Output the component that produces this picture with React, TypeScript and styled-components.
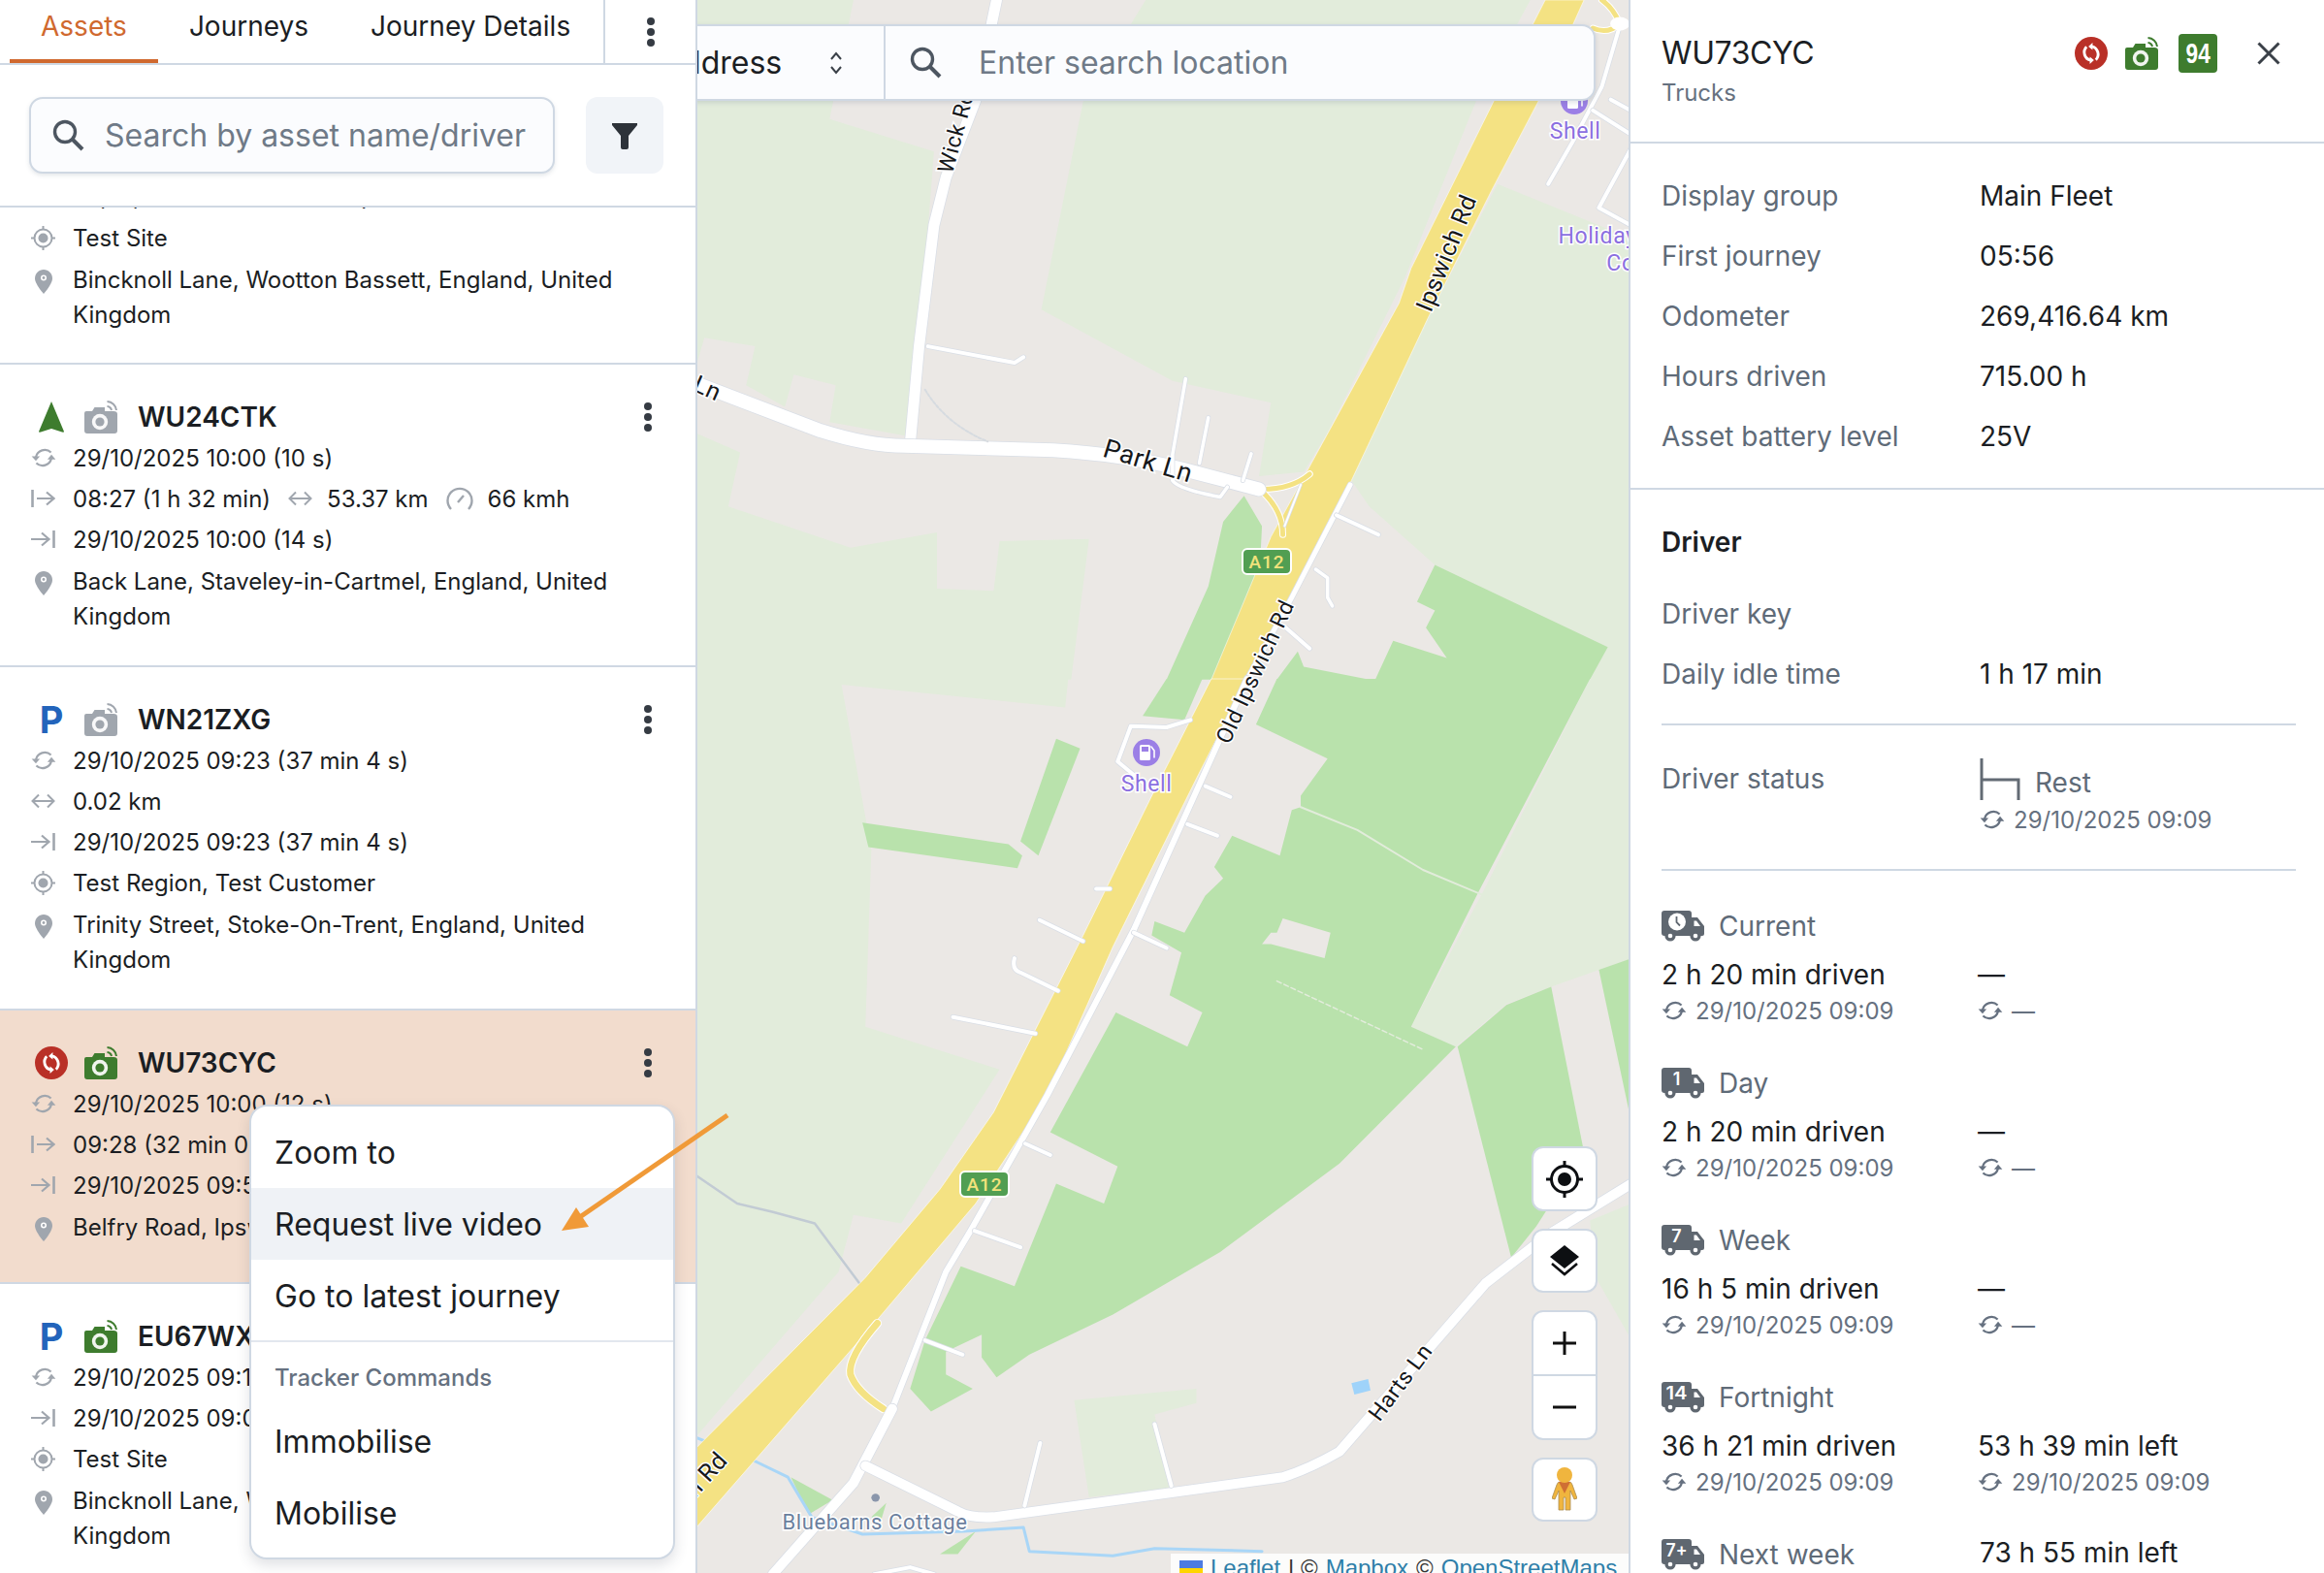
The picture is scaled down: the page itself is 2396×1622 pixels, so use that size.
import React from "react";
import styled, { createGlobalStyle } from "styled-components";

const Global = createGlobalStyle`
  html, body { margin: 0; padding: 0; height: 100%; overflow: hidden; background: #fff; }
  body { font-family: Inter, "Liberation Sans", sans-serif; color: #1b1e23; }
  * { box-sizing: border-box; }
`;

const LINE = "#cfd8e3";

const App_ = styled.div`
  position: relative;
  display: flex;
  width: 2396px;
  height: 1622px;
  overflow: hidden;
`;

/* ---------- left panel ---------- */
const LeftPanel = styled.aside`
  position: relative;
  z-index: 3;
  flex: 0 0 718px;
  display: flex;
  flex-direction: column;
  background: #fff;
  border-right: 2px solid ${LINE};
`;
const Tabs = styled.nav`
  display: flex;
  height: 67px;
  padding-left: 10px;
  border-bottom: 2px solid ${LINE};
`;
const Tab = styled.div<{ $active?: boolean }>`
  flex: none;
  height: 65px;
  padding: 0 32px 7px;
  display: flex;
  align-items: center;
  font-size: 28px;
  white-space: nowrap;
  color: ${(p) => (p.$active ? "#d0692f" : "#1b1e23")};
  border-bottom: 4px solid ${(p) => (p.$active ? "#d0692f" : "transparent")};
`;
const TabMore = styled.div`
  flex: none;
  margin-left: auto;
  width: 95px;
  height: 65px;
  display: flex;
  align-items: center;
  justify-content: center;
  border-left: 2px solid ${LINE};
`;
const Filters = styled.div`
  display: flex;
  gap: 32px;
  padding: 33px 33px 33px 30px;
  border-bottom: 2px solid ${LINE};
`;
const SearchBox = styled.div`
  flex: 0 0 542px;
  height: 79px;
  display: flex;
  align-items: center;
  gap: 21px;
  padding-left: 22px;
  background: #fbfcfe;
  border: 2px solid ${LINE};
  border-radius: 14px;
  box-shadow: 0 2px 4px rgba(90, 105, 125, 0.16);
  font-size: 32px;
  color: #6f7a87;
  white-space: nowrap;
`;
const FilterButton = styled.div`
  flex: 0 0 80px;
  height: 79px;
  display: flex;
  align-items: center;
  justify-content: center;
  background: #f1f4f8;
  border-radius: 12px;
`;
const List = styled.div`
  flex: 1;
  min-height: 0;
  overflow: hidden;
`;
const ListTrack = styled.div`
  margin-top: -149px;
`;
const Item = styled.article<{ $selected?: boolean; $lead?: boolean }>`
  position: relative;
  padding: 33px 33px ${(p) => (p.$lead ? "31px" : "32px")} 32px;
  background: ${(p) => (p.$selected ? "#f2dccd" : "#fff")};
  border-bottom: 2px solid ${LINE};
`;
const ItemHead = styled.div`
  display: flex;
  align-items: center;
  height: 42px;
  font-size: 28px;
  font-weight: 600;
  color: #1b1e23;
`;
const StatusSlot = styled.span`
  flex: 0 0 54px;
  display: flex;
  justify-content: center;
  padding-right: 14px;
  margin-left: 1px;
`;
const CameraSlot = styled.span`
  flex: 0 0 55px;
  display: flex;
`;
const ParkLetter = styled.span`
  font-size: 38px;
  font-weight: 700;
  line-height: 42px;
  color: #2364bb;
`;
const ItemMore = styled.span`
  margin-left: auto;
  margin-right: 11px;
  display: flex;
`;
const Row = styled.div`
  display: flex;
  align-items: center;
  height: 42px;
  font-size: 24px;
  white-space: nowrap;
`;
const RowIcon = styled.span`
  flex: 0 0 43px;
  display: flex;
  align-items: center;
`;
const InlineIcon = styled.span`
  display: flex;
  margin: 0 15px 0 18px;
`;
const AddressRow = styled.div`
  display: flex;
  margin-top: 5px;
  font-size: 24px;
  line-height: 36px;
`;
const AddressIcon = styled.span`
  flex: 0 0 43px;
  padding: 6px 0 0 4px;
`;

const Menu = styled.div`
  position: absolute;
  left: 257px;
  top: 1139px;
  width: 439px;
  height: 469px;
  padding: 10px 0 9px;
  background: #fff;
  border: 2px solid ${LINE};
  border-radius: 18px;
  box-shadow: 0 6px 14px rgba(60, 70, 85, 0.16);
`;
const MenuItem = styled.div<{ $hover?: boolean }>`
  height: 74px;
  padding-left: 24px;
  display: flex;
  align-items: center;
  font-size: 32px;
  background: ${(p) => (p.$hover ? "#eff2f6" : "transparent")};
`;
const MenuRule = styled.div`
  height: 2px;
  margin-top: 9px;
  background: #e2e7ee;
`;
const MenuLabel = styled.div`
  height: 65px;
  padding: 8px 0 0 24px;
  display: flex;
  align-items: center;
  font-size: 24px;
  font-weight: 500;
  color: #667180;
`;

/* ---------- map ---------- */
const MapPane = styled.main`
  position: relative;
  z-index: 1;
  flex: 0 0 960px;
  overflow: hidden;
  background: #ebe8e5;
`;
const MapCanvas = styled.svg`
  display: block;
  & path,
  & polyline {
    vector-effect: non-scaling-stroke;
    fill: none;
    stroke-linecap: round;
    stroke-linejoin: round;
  }
`;
const AddressBar = styled.div`
  position: absolute;
  left: -69px;
  top: 25px;
  width: 995px;
  height: 79px;
  display: flex;
  background: #fbfcfe;
  border: 2px solid ${LINE};
  border-radius: 14px;
  box-shadow: 0 2px 5px rgba(90, 105, 125, 0.2);
  font-size: 32px;
`;
const AddressSelect = styled.div`
  flex: 0 0 261px;
  display: flex;
  align-items: center;
  justify-content: space-between;
  padding: 0 42px 0 29px;
  border-right: 2px solid ${LINE};
`;
const AddressInput = styled.div`
  flex: 1;
  display: flex;
  align-items: center;
  gap: 38px;
  padding-left: 25px;
  color: #6f7a87;
`;
const Controls = styled.div`
  position: absolute;
  right: 32px;
  bottom: 53px;
  display: flex;
  flex-direction: column;
  gap: 18px;
`;
const ControlCard = styled.div`
  width: 68px;
  background: #fff;
  border: 2px solid ${LINE};
  border-radius: 12px;
  overflow: hidden;
`;
const ControlCell = styled.div<{ $h?: number; $divider?: boolean }>`
  height: ${(p) => p.$h ?? 62}px;
  display: flex;
  align-items: center;
  justify-content: center;
  border-bottom: ${(p) => (p.$divider ? `2px solid ${LINE}` : "none")};
`;
const Attribution = styled.div`
  position: absolute;
  right: 0;
  bottom: -10px;
  width: 472px;
  height: 30px;
  display: flex;
  align-items: center;
  gap: 8px;
  padding-left: 9px;
  background: rgba(255, 255, 255, 0.85);
  font-family: "Liberation Sans", Arial, sans-serif;
  font-size: 24px;
  color: #333;
  white-space: nowrap;
`;
const AttrLink = styled.span`
  color: #2f7fa9;
`;

/* ---------- detail panel ---------- */
const Detail = styled.aside`
  position: relative;
  z-index: 2;
  flex: 0 0 718px;
  display: flex;
  flex-direction: column;
  overflow: hidden;
  background: #fff;
  border-left: 2px solid ${LINE};
`;
const DetailHeader = styled.header`
  flex: 0 0 148px;
  display: flex;
  justify-content: space-between;
  padding: 34px 46px 0 32px;
  border-bottom: 2px solid ${LINE};
`;
const Plate = styled.div`
  font-size: 32px;
  line-height: 42px;
  letter-spacing: -0.4px;
`;
const Group = styled.div`
  margin-top: 2px;
  font-size: 24px;
  line-height: 36px;
  color: #667180;
`;
const HeaderIcons = styled.div`
  display: flex;
  align-items: center;
  height: 42px;
  gap: 21px;
`;
const RedSlot = styled.span`
  display: flex;
  margin-right: -3px;
`;
const Score = styled.div`
  width: 40px;
  height: 40px;
  margin-right: 20px;
  display: flex;
  align-items: center;
  justify-content: center;
  background: #3e7c2e;
  border-radius: 4px;
  font-family: "Liberation Sans", sans-serif;
  font-weight: 700;
  font-size: 29px;
  color: #fff;
`;
const ScoreDigits = styled.span`
  display: block;
  transform: scaleX(0.78);
`;
const Section = styled.section`
  padding: 23px 0 22px 32px;
  border-bottom: 2px solid ${LINE};
`;
const SectionPlain = styled.section`
  padding: 33px 30px 0 32px;
`;
const Field = styled.div`
  display: grid;
  grid-template-columns: 328px 1fr;
  align-items: center;
  height: 62px;
  font-size: 28px;
`;
const FieldName = styled.span`
  color: #5f6b78;
`;
const SectionTitle = styled.h3`
  margin: 0 0 22px;
  height: 42px;
  line-height: 42px;
  font-size: 28px;
  font-weight: 600;
`;
const Rule = styled.hr`
  margin: 20px 0 0;
  border: 0;
  height: 2px;
  background: ${LINE};
`;
const StatusGrid = styled.div`
  display: grid;
  grid-template-columns: 328px 1fr;
  padding: 38px 0 15px;
  font-size: 28px;
`;
const RestLine = styled.div`
  display: flex;
  align-items: flex-end;
  gap: 15px;
  height: 42px;
  color: #5f6b78;
  margin-top: -3px;
  & > span {
    line-height: 36px;
  }
`;
const Stamp = styled.div`
  display: flex;
  align-items: center;
  gap: 9px;
  height: 32px;
  font-size: 24px;
  color: #667180;
`;
const StatusStamp = styled(Stamp)`
  margin-top: 4px;
`;
const Periods = styled.div`
  padding-top: 36px;
`;
const Period = styled.div`
  display: grid;
  grid-template-columns: 326px 1fr;
  grid-template-rows: 42px 50px 32px;
  height: 162px;
  font-size: 28px;
`;
const PeriodHead = styled.div`
  display: flex;
  align-items: center;
  gap: 15px;
  color: #5f6b78;
`;
const PeriodValue = styled.div`
  display: flex;
  align-items: center;
  margin-top: 8px;
`;
const PeriodAside = styled.div`
  display: flex;
  align-items: center;
  margin-top: -4px;
  padding-left: 2px;
`;

/* ---------- icons ---------- */
const GREY = "#a0a6ae";

const Dots = ({ color = "#353b43" }: { color?: string }) => (
  <svg width="10" height="32" viewBox="0 0 10 32" fill={color}>
    <circle cx="5" cy="5" r="4" />
    <circle cx="5" cy="16" r="4" />
    <circle cx="5" cy="27" r="4" />
  </svg>
);
const SearchGlyph = () => (
  <svg width="33" height="33" viewBox="0 0 33 33" fill="none" stroke="#4d5661" strokeWidth="3.4">
    <circle cx="13" cy="13" r="10.5" />
    <path d="M21 21 L31 31" strokeWidth="4" />
  </svg>
);
const Funnel = () => (
  <svg width="28" height="28" viewBox="0 0 28 28" fill="#2d3239">
    <path d="M1 1 H27 V3 L18 14 V26 Q18 28 16 28 H12 Q10 28 10 26 V14 L1 3 Z" />
  </svg>
);
const Sync = ({ color = GREY, size = 26 }: { color?: string; size?: number }) => (
  <svg width={size} height={size} viewBox="0 0 24 24" fill="none" stroke={color} strokeWidth="2">
    <path d="M19 7 A8.6 8.6 0 0 0 4.6 11.5" />
    <path d="M5 17 A8.6 8.6 0 0 0 19.4 12.5" />
    <path d="M0.6 10.5 H8.4 L4.6 15 Z" fill={color} stroke="none" />
    <path d="M15.6 13.5 H23.4 L19.4 9 Z" fill={color} stroke="none" />
  </svg>
);
const StartGlyph = () => (
  <svg width="25" height="22" viewBox="0 0 25 22" fill="none" stroke={GREY} strokeWidth="2.2">
    <path d="M1.5 2 V20" strokeWidth="2.6" />
    <path d="M6 11 H23 M16 4.5 L23.5 11 L16 17.5" />
  </svg>
);
const EndGlyph = () => (
  <svg width="25" height="22" viewBox="0 0 25 22" fill="none" stroke={GREY} strokeWidth="2.2">
    <path d="M23.5 2 V20" strokeWidth="2.6" />
    <path d="M0 11 H18 M11 4.5 L18.5 11 L11 17.5" />
  </svg>
);
const Span = () => (
  <svg width="25" height="18" viewBox="0 0 25 18" fill="none" stroke={GREY} strokeWidth="2">
    <path d="M1.5 9 H23.5 M8 2.5 L1.5 9 L8 15.5 M17 2.5 L23.5 9 L17 15.5" />
  </svg>
);
const Gauge = () => (
  <svg width="28" height="26" viewBox="0 0 28 26" fill="none" stroke={GREY} strokeWidth="2.4">
    <path d="M5 24 A12.5 12.5 0 1 1 23 24" />
    <path d="M12 17 L18 10" />
  </svg>
);
const Site = () => (
  <svg width="25" height="25" viewBox="0 0 25 25" fill="none" stroke={GREY} strokeWidth="2">
    <circle cx="12.5" cy="12.5" r="9" />
    <circle cx="12.5" cy="12.5" r="5" fill={GREY} stroke="none" />
    <path d="M12.5 0 V3.5 M12.5 21.5 V25 M0 12.5 H3.5 M21.5 12.5 H25" />
  </svg>
);
const Pin = () => (
  <svg width="18" height="25" viewBox="0 0 18 25">
    <path d="M9 0 C4 0 0 4 0 9 C0 15 9 25 9 25 C9 25 18 15 18 9 C18 4 14 0 9 0 Z" fill={GREY} />
    <circle cx="9" cy="8.5" r="3" fill="#fff" />
    <circle cx="9" cy="8.5" r="1.4" fill={GREY} />
  </svg>
);
const Camera = ({ color }: { color: string }) => (
  <svg width="34" height="34" viewBox="0 0 34 34">
    <path
      d="M2 11 H8 L10.5 7 H21 V11 L30 11 Q34 11 34 14 V31 Q34 34 31 34 H3 Q0 34 0 31 V13 Q0 11 2 11 Z"
      fill={color}
    />
    <circle cx="16" cy="22" r="8.2" fill="#fff" opacity=".92" />
    <circle cx="16" cy="22" r="4.6" fill={color} />
    <path d="M23.5 1 A10 10 0 0 1 33 10 M23.5 6 A5 5 0 0 1 28 10" fill="none" stroke={color} strokeWidth="2" />
  </svg>
);
const NavArrow = () => (
  <svg width="26" height="32" viewBox="0 0 26 32">
    <path d="M13 0 L26 31 Q26 32 24 31.5 L13 28 L2 31.5 Q0 32 0 31 Z" fill="#3e7c2e" />
  </svg>
);
const RedSync = ({ size = 34 }: { size?: number }) => (
  <svg width={size} height={size} viewBox="0 0 34 34">
    <circle cx="17" cy="17" r="17" fill="#b93027" />
    <g transform="rotate(90 17 17) translate(5.5 5.5) scale(.96)">
      <path d="M19 7 A8.6 8.6 0 0 0 4.6 11.5 M5 17 A8.6 8.6 0 0 0 19.4 12.5" fill="none" stroke="#fff" strokeWidth="3" />
      <path d="M0.6 10.5 H8.4 L4.6 15 Z M15.6 13.5 H23.4 L19.4 9 Z" fill="#fff" />
    </g>
  </svg>
);
const Close = () => (
  <svg width="24" height="24" viewBox="0 0 24 24" fill="none" stroke="#3a4048" strokeWidth="3">
    <path d="M1.5 1.5 L22.5 22.5 M22.5 1.5 L1.5 22.5" />
  </svg>
);
const Bed = () => (
  <svg width="42" height="43" viewBox="0 0 42 43" fill="none" stroke="#636b74" strokeWidth="3">
    <path d="M2 0 V43" />
    <path d="M2 22 H40 V43" />
  </svg>
);
const Truck = ({ mark }: { mark: string }) => (
  <svg width="44" height="32" viewBox="0 0 44 32">
    <path
      d="M3 0 H28 Q31 0 31 3 V7 H37 L44 16 V24 Q44 26 42 26 H3 Q0 26 0 23 V3 Q0 0 3 0 Z"
      fill="#5f6770"
    />
    <path d="M33.5 10.5 H36 L40 16 H33.5 Z" fill="#fff" />
    <circle cx="9" cy="26" r="5.6" fill="#5f6770" />
    <circle cx="9" cy="26" r="2.3" fill="#fff" />
    <circle cx="35" cy="26" r="5.6" fill="#5f6770" />
    <circle cx="35" cy="26" r="2.3" fill="#fff" />
    {mark === "clock" ? (
      <g>
        <circle cx="16" cy="11.5" r="9" fill="#fff" />
        <path d="M15.5 6 V12 L19 15.5" fill="none" stroke="#5f6770" strokeWidth="1.8" />
      </g>
    ) : (
      <text
        x="15.5"
        y="18"
        textAnchor="middle"
        fontFamily="Inter, sans-serif"
        fontWeight="600"
        fontSize="18"
        fill="#fff"
        textLength={mark.length > 1 ? 22 : undefined}
        lengthAdjust="spacingAndGlyphs"
      >
        {mark}
      </text>
    )}
  </svg>
);
const Chevrons = () => (
  <svg width="14" height="24" viewBox="0 0 14 24" fill="none" stroke="#3a4048" strokeWidth="2">
    <path d="M2 8 L7 2 L12 8 M2 16 L7 22 L12 16" />
  </svg>
);
const Locate = () => (
  <svg width="38" height="38" viewBox="0 0 38 38" fill="none" stroke="#0d0f12" strokeWidth="3">
    <circle cx="19" cy="19" r="13.5" />
    <circle cx="19" cy="19" r="7" fill="#0d0f12" stroke="none" />
    <path d="M19 0 V6 M19 32 V38 M0 19 H6 M32 19 H38" />
  </svg>
);
const Layers = () => (
  <svg width="30" height="32" viewBox="0 0 30 32">
    <path d="M15 0 L30 12 L15 24 L0 12 Z" fill="#0d0f12" />
    <path d="M2 19 L15 30 L28 19" fill="none" stroke="#0d0f12" strokeWidth="2.6" />
  </svg>
);
const Plus = () => (
  <svg width="24" height="24" viewBox="0 0 24 24" fill="none" stroke="#111" strokeWidth="3">
    <path d="M12 0 V24 M0 12 H24" />
  </svg>
);
const Minus = () => (
  <svg width="24" height="4" viewBox="0 0 24 4" fill="none" stroke="#111" strokeWidth="3">
    <path d="M0 2 H24" />
  </svg>
);
const Pegman = () => (
  <svg width="26" height="46" viewBox="0 0 26 46">
    <path
      d="M8 15 H18 Q20 15 21 18 L26 32 L23 33 L19 24 V44 H14 V31 H12 V44 H7 V24 L3 33 L0 32 L5 18 Q6 15 8 15 Z"
      fill="#f0b53e"
      stroke="#a98b4e"
      strokeWidth=".8"
    />
    <path d="M7 15 H19 L13 27 Z" fill="#cf6f34" />
    <circle cx="13" cy="8" r="8" fill="#f0b53e" />
  </svg>
);
const Flag = () => (
  <svg width="24" height="16" viewBox="0 0 24 16">
    <rect width="24" height="8" fill="#4c7be1" />
    <rect y="8" width="24" height="8" fill="#ffd500" />
  </svg>
);

/* ---------- map drawing ---------- */
const Z6 = "translate(716 0) scale(.6148 .4464)";
const Z7 = "translate(716 700) scale(.6148 .588)";
const LIGHT = "#e2ecdb";
const DARK = "#b9e2ac";
const ROAD = "#f4e283";

const Road = ({ d, w }: { d: string; w: number }) => (
  <g>
    <path d={d} stroke="#d9dee6" strokeWidth={w + 1.5} />
    <path d={d} stroke="#fff" strokeWidth={w} />
  </g>
);
const Slip = ({ d, w }: { d: string; w: number }) => (
  <g>
    <path d={d} stroke="#fff" strokeWidth={w + 2} />
    <path d={d} stroke={ROAD} strokeWidth={w} />
  </g>
);
const Label = styled.text<{ $size?: number; $fill?: string }>`
  font-family: Roboto, "Noto Sans", sans-serif;
  font-size: ${(p) => p.$size ?? 23}px;
  fill: ${(p) => p.$fill ?? "#16181b"};
  stroke: #fff;
  stroke-width: 3px;
  paint-order: stroke;
  text-anchor: middle;
  letter-spacing: 0.6px;
`;
const Shield = ({ x, y }: { x: number; y: number }) => (
  <g>
    <rect x={x - 25} y={y - 13} width="50" height="26" rx="5" fill="#519e52" stroke="#fff" strokeWidth="2" />
    <text
      x={x}
      y={y + 7}
      textAnchor="middle"
      fontFamily="Roboto, sans-serif"
      fontWeight="500"
      fontSize="19"
      letterSpacing="1"
      fill="#f1e27c"
    >
      A12
    </text>
  </g>
);
const Fuel = ({ x, y }: { x: number; y: number }) => (
  <g>
    <circle cx={x} cy={y} r="14" fill="#9b7fe6" />
    <rect x={x - 7} y={y - 8} width="11" height="16" rx="1.5" fill="#fff" />
    <rect x={x - 5} y={y - 6} width="7" height="5" fill="#9b7fe6" />
    <path d={`M${x + 5} ${y - 6} L${x + 8} ${y - 2} V${y + 5}`} stroke="#fff" strokeWidth="1.6" />
  </g>
);

const MapArt = () => (
  <MapCanvas width="960" height="1622" viewBox="718 0 960 1622">
    <g transform={Z6}>
      <polygon fill={LIGHT} points="0,0 265,0 225,275 400,350 375,790 365,1010 225,975 235,890 165,865 150,940 85,890 100,800 15,780 0,850" />
      <polygon fill={LIGHT} points="0,1000 75,1045 55,1170 260,1265 405,1230 405,1360 500,1365 510,1250 660,1245 630,1570 0,1570" />
      <polygon fill={LIGHT} points="755,0 1400,0 1310,230 1190,640 1060,1000 1020,1090 945,1100 965,930 800,880 580,715 650,235" />
      <polygon fill={LIGHT} points="1345,425 1568,550 1568,1570 1500,1570 1530,1495 1240,1305 1130,1170 1100,1110 1230,730" />
      <polygon fill={DARK} points="885,1205 920,1145 950,1215 948,1270 935,1360 870,1570 790,1570 860,1355" />
      <polygon fill={DARK} points="1240,1305 1530,1495 1500,1570 1140,1570 1170,1480 1260,1520 1225,1450 1240,1410 1210,1390" />
      <polygon fill={DARK} points="975,1570 1010,1505 1020,1540 1130,1570" />
      <polygon fill={ROAD} stroke="#fff" strokeWidth="1" points="1425,0 1490,0 1415,230 1335,440 1230,730 1100,1110 1045,1260 925,1570 865,1570 965,1240 1025,1090 1180,700 1200,620 1340,230" />
      <Slip d="M950 1130 Q1000 1130 1030 1095" w={5} />
      <Slip d="M950 1135 Q985 1180 985 1235" w={5} />
      <Slip d="M1505 65 Q1530 80 1550 55 Q1540 20 1520 0" w={5} />
      <Road d="M1015 1120 L988 1215" w={2} />
      <Road d="M505 0 L470 230 L420 410 L400 520 L375 800 L360 1025" w={11} />
      <Road d="M0 885 L210 995 Q290 1030 350 1030 L600 1040 Q720 1050 820 1085 L945 1130" w={14} />
      <Road d="M390 800 L535 838 L550 825" w={4} />
      <path d="M385 900 Q420 980 490 1020" stroke="#d6dbe0" strokeWidth="2" strokeDasharray="3 2" />
      <Road d="M822 875 L800 1050 L800 1110 Q810 1130 880 1148 L892 1125" w={3.5} />
      <Road d="M860 965 L845 1070" w={3.5} />
      <Road d="M932 1048 L918 1110" w={3.5} />
      <Road d="M1098 1120 L1000 1380 L925 1570" w={5} />
      <Road d="M1075 1190 L1145 1235" w={4} />
      <Road d="M1040 1315 L1060 1335 L1060 1380 L1068 1400" w={3.5} />
      <Road d="M990 1450 L1030 1498" w={4} />
      <Road d="M1550 60 L1520 200 L1470 330 L1430 425" w={4} />
      <Road d="M1568 345 L1515 480 L1568 520" w={4} />
      <Road d="M1535 230 L1568 255" w={4} />
      <Road d="M1505 255 L1568 310" w={4} />
      <circle cx="1550" cy="55" r="16" fill="#fff" />
    </g>
    <g transform={Z7}>
      <polygon fill={LIGHT} points="0,0 625,0 620,50 245,10 295,300 285,610 510,685 345,955 265,940 240,1040 0,1330" />
      <polygon fill={LIGHT} points="1500,0 1570,0 1570,490 1435,540 1360,570 1275,645 1200,610 1320,375" />
      <polygon fill={LIGHT} points="1500,950 1570,920 1570,1160 1510,1050" />
      <polygon fill={LIGHT} points="635,1265 840,1245 840,1270 770,1290 795,1420 660,1435" />
      <polygon fill={DARK} points="790,0 750,65 820,72 850,0" />
      <polygon fill={DARK} points="605,105 645,122 575,310 545,285" />
      <polygon fill={DARK} points="280,252 525,290 548,310 540,332 290,295" />
      <polygon fill={DARK} points="975,0 940,80 1060,140 1015,205 1015,225 1000,230 980,310 900,275 870,330 885,350 855,380 820,445 770,425 765,450 815,480 795,555 850,585 825,645 705,585 595,795 708,855 685,920 605,885 535,1065 445,1030 385,1160 360,1245 395,1285 465,1245 420,1220 420,1180 480,1150 480,1190 505,1225 560,1185 700,1115 880,1005 1080,850 1275,645 1200,610 1310,380 1500,0" />
      <polygon fill="#ebe8e5" points="985,420 1065,445 1055,490 965,465 950,465 965,445 975,445" />
      <polygon fill={DARK} points="1278,645 1360,572 1435,540 1490,830 1410,960 1368,1015" />
      <polygon fill={DARK} points="1515,510 1570,490 1570,780" />
      <polygon fill={DARK} points="160,1400 230,1440 190,1465" />
      <polygon fill={DARK} points="295,1470 320,1445 310,1480" />
      <polygon fill={DARK} points="410,1535 470,1495 440,1535" />
      <path d="M1015 225 L1110 265 L1220 335 L1318 378" stroke="#e2ecdb" strokeWidth="2" />
      <path d="M975 530 L1220 650" stroke="#e2ecdb" strokeWidth="1.5" strokeDasharray="5 3" />
      <path d="M0 870 L70 920 L130 935 L200 955 L275 1060" stroke="#c2cbd4" strokeWidth="2.5" />
      <path d="M0 1330 L100 1372 L155 1400 L195 1470 L280 1500 L450 1495 L550 1488 L560 1530 L700 1538 L770 1525 L950 1530" stroke="#a9d6f7" strokeWidth="3" />
      <polygon fill="#9fd3fa" points="1100,1235 1128,1228 1132,1248 1105,1255" />
      <circle cx="302" cy="1436" r="7" fill="#8a96ab" />
      <polygon fill={ROAD} stroke="#fff" strokeWidth="1" points="865,0 925,0 840,175 700,470 590,730 470,920 300,1130 0,1490 0,1350 285,1050 410,895 500,760 650,450 770,195" />
      <Slip d="M305 1130 Q255 1190 260 1220 Q270 1250 315 1280" w={7} />
      <Road d="M925 0 L735 440 L590 730 L460 970 L420 1040 L330 1280" w={6} />
      <Road d="M330 1280 L265 1410 L130 1570" w={10} />
      <Road d="M855 188 L897 207" w={4} />
      <Road d="M825 255 L875 275" w={4} />
      <Road d="M735 445 L790 472" w={4} />
      <Road d="M672 368 L695 368" w={4} />
      <Road d="M577 423 L650 460" w={4} />
      <Road d="M535 490 Q530 510 545 515 L608 547" w={4} />
      <Road d="M432 593 L570 622" w={4} />
      <Road d="M553 815 L595 835" w={4} />
      <Road d="M468 968 L545 997" w={4} />
      <Road d="M385 1160 L448 1185" w={4} />
      <Road d="M830 72 L790 85 L730 83 L708 145 L760 190" w={4} />
      <Road d="M1570 885 L1430 975 L1325 1060 L1080 1355 Q1030 1385 985 1400 L500 1470 Q460 1472 440 1460 L285 1380" w={10} />
      <Road d="M578 1340 L552 1450" w={4} />
      <Road d="M770 1307 L798 1415" w={4} />
      <Road d="M300 1570 L360 1558 L400 1570" w={4} />
    </g>
    <Label $size={27} transform="translate(1180 484) rotate(17)">Park Ln</Label>
    <Label $size={25} transform="translate(725 408) rotate(24)">Ln</Label>
    <Label transform="translate(992 138) rotate(-75)">Wick Rd</Label>
    <Label $size={25} transform="translate(1498 264) rotate(-68)">Ipswich Rd</Label>
    <Label transform="translate(1300 696) rotate(-65)">Old Ipswich Rd</Label>
    <Label transform="translate(1449 1430) rotate(-53)">Harts Ln</Label>
    <Label $size={25} transform="translate(733 1526) rotate(-48)">n Rd</Label>
    <Label $fill="#8b6fe0" transform="translate(1623 143)">Shell</Label>
    <Label $fill="#8b6fe0" transform="translate(1646 251)">Holiday</Label>
    <Label $fill="#8b6fe0" transform="translate(1670 279)">Co</Label>
    <Label $fill="#8b6fe0" transform="translate(1181 816)">Shell</Label>
    <Label $size={22} $fill="#6b7f9e" transform="translate(901 1577)">Bluebarns Cottage</Label>
    <Fuel x={1181} y={776} />
    <Fuel x={1622} y={104} />
    <Shield x={1305} y={579} />
    <Shield x={1014} y={1221} />
  </MapCanvas>
);

/* ---------- page data ---------- */
const Arrow = styled.svg`
  position: absolute;
  left: 570px;
  top: 1140px;
  z-index: 5;
`;

type Asset = {
  id: string;
  status: "nav" | "park" | "alert";
  camera: string;
  selected?: boolean;
  sync: string;
  start?: string;
  dist?: string;
  speed?: string;
  distOnly?: string;
  end: string;
  site?: string;
  address: string;
};

const CAM_GREY = "#a0a6ae";
const CAM_GREEN = "#3e7c2e";
const BINCK = "Bincknoll Lane, Wootton Bassett, England, United Kingdom";

const assets: Asset[] = [
  { id: "EU67WXA", status: "park", camera: CAM_GREEN, sync: "29/10/2025 09:18 (42 min)", end: "29/10/2025 09:06 (54 min)", site: "Test Site", address: BINCK },
  { id: "WU24CTK", status: "nav", camera: CAM_GREY, sync: "29/10/2025 10:00 (10 s)", start: "08:27 (1 h 32 min)", dist: "53.37 km", speed: "66 kmh", end: "29/10/2025 10:00 (14 s)", address: "Back Lane, Staveley-in-Cartmel, England, United Kingdom" },
  { id: "WN21ZXG", status: "park", camera: CAM_GREY, sync: "29/10/2025 09:23 (37 min 4 s)", distOnly: "0.02 km", end: "29/10/2025 09:23 (37 min 4 s)", site: "Test Region, Test Customer", address: "Trinity Street, Stoke-On-Trent, England, United Kingdom" },
  { id: "WU73CYC", status: "alert", camera: CAM_GREEN, selected: true, sync: "29/10/2025 10:00 (12 s)", start: "09:28 (32 min 0 s)", end: "29/10/2025 09:58 (2 min)", address: "Belfry Road, Ipswich, England, United Kingdom" },
  { id: "EU67WXK", status: "park", camera: CAM_GREEN, sync: "29/10/2025 09:18 (42 min)", end: "29/10/2025 09:06 (54 min)", site: "Test Site", address: BINCK },
];

const AssetCard = ({ a, lead }: { a: Asset; lead?: boolean }) => (
  <Item $selected={a.selected} $lead={lead}>
    <ItemHead>
      <StatusSlot>
        {a.status === "nav" && <NavArrow />}
        {a.status === "park" && <ParkLetter>P</ParkLetter>}
        {a.status === "alert" && <RedSync />}
      </StatusSlot>
      <CameraSlot>
        <Camera color={a.camera} />
      </CameraSlot>
      {a.id}
      <ItemMore>
        <Dots />
      </ItemMore>
    </ItemHead>
    <Row>
      <RowIcon><Sync /></RowIcon>
      {a.sync}
    </Row>
    {a.start && (
      <Row>
        <RowIcon><StartGlyph /></RowIcon>
        {a.start}
        {a.dist && <InlineIcon><Span /></InlineIcon>}
        {a.dist}
        {a.speed && <InlineIcon><Gauge /></InlineIcon>}
        {a.speed}
      </Row>
    )}
    {a.distOnly && (
      <Row>
        <RowIcon><Span /></RowIcon>
        {a.distOnly}
      </Row>
    )}
    <Row>
      <RowIcon><EndGlyph /></RowIcon>
      {a.end}
    </Row>
    {a.site && (
      <Row>
        <RowIcon><Site /></RowIcon>
        {a.site}
      </Row>
    )}
    <AddressRow>
      <AddressIcon><Pin /></AddressIcon>
      <span>{a.address}</span>
    </AddressRow>
  </Item>
);

const fields = [
  ["Display group", "Main Fleet"],
  ["First journey", "05:56"],
  ["Odometer", "269,416.64 km"],
  ["Hours driven", "715.00 h"],
  ["Asset battery level", "25V"],
];

type PeriodData = { mark: string; name: string; left: string; leftAt: string; right: string; rightAt: string };
const periods: PeriodData[] = [
  { mark: "clock", name: "Current", left: "2 h 20 min driven", leftAt: "29/10/2025 09:09", right: "—", rightAt: "—" },
  { mark: "1", name: "Day", left: "2 h 20 min driven", leftAt: "29/10/2025 09:09", right: "—", rightAt: "—" },
  { mark: "7", name: "Week", left: "16 h 5 min driven", leftAt: "29/10/2025 09:09", right: "—", rightAt: "—" },
  { mark: "14", name: "Fortnight", left: "36 h 21 min driven", leftAt: "29/10/2025 09:09", right: "53 h 39 min left", rightAt: "29/10/2025 09:09" },
];

export default function App() {
  return (
    <App_>
      <Global />
      <LeftPanel>
        <Tabs>
          <Tab $active>Assets</Tab>
          <Tab>Journeys</Tab>
          <Tab>Journey Details</Tab>
          <TabMore><Dots /></TabMore>
        </Tabs>
        <Filters>
          <SearchBox>
            <SearchGlyph />
            Search by asset name/driver
          </SearchBox>
          <FilterButton><Funnel /></FilterButton>
        </Filters>
        <List>
          <ListTrack>
            {assets.map((a, i) => (
              <AssetCard key={a.id} a={a} lead={i === 0} />
            ))}
          </ListTrack>
        </List>
        <Menu>
          <MenuItem>Zoom to</MenuItem>
          <MenuItem $hover>Request live video</MenuItem>
          <MenuItem>Go to latest journey</MenuItem>
          <MenuRule />
          <MenuLabel>Tracker Commands</MenuLabel>
          <MenuItem>Immobilise</MenuItem>
          <MenuItem>Mobilise</MenuItem>
        </Menu>
      </LeftPanel>

      <MapPane>
        <MapArt />
        <AddressBar>
          <AddressSelect>
            Address
            <Chevrons />
          </AddressSelect>
          <AddressInput>
            <SearchGlyph />
            Enter search location
          </AddressInput>
        </AddressBar>
        <Controls>
          <ControlCard><ControlCell $h={63}><Locate /></ControlCell></ControlCard>
          <ControlCard><ControlCell><Layers /></ControlCell></ControlCard>
          <ControlCard>
            <ControlCell $h={66} $divider><Plus /></ControlCell>
            <ControlCell $h={64}><Minus /></ControlCell>
          </ControlCard>
          <ControlCard><ControlCell><Pegman /></ControlCell></ControlCard>
        </Controls>
        <Attribution>
          <Flag />
          <AttrLink>Leaflet</AttrLink> | © <AttrLink>Mapbox</AttrLink> © <AttrLink>OpenStreetMaps</AttrLink>
        </Attribution>
      </MapPane>

      <Detail>
        <DetailHeader>
          <div>
            <Plate>WU73CYC</Plate>
            <Group>Trucks</Group>
          </div>
          <HeaderIcons>
            <RedSlot><RedSync /></RedSlot>
            <Camera color={CAM_GREEN} />
            <Score><ScoreDigits>94</ScoreDigits></Score>
            <Close />
          </HeaderIcons>
        </DetailHeader>
        <Section>
          {fields.map(([k, v]) => (
            <Field key={k}>
              <FieldName>{k}</FieldName>
              <span>{v}</span>
            </Field>
          ))}
        </Section>
        <SectionPlain>
          <SectionTitle>Driver</SectionTitle>
          <Field>
            <FieldName>Driver key</FieldName>
            <span />
          </Field>
          <Field>
            <FieldName>Daily idle time</FieldName>
            <span>1 h 17 min</span>
          </Field>
          <Rule />
          <StatusGrid>
            <FieldName>Driver status</FieldName>
            <div>
              <RestLine>
                <Bed />
                <span>Rest</span>
              </RestLine>
              <StatusStamp>
                <Sync color="#667180" />
                29/10/2025 09:09
              </StatusStamp>
            </div>
          </StatusGrid>
          <Rule />
          <Periods>
            {periods.map((p) => (
              <Period key={p.name}>
                <PeriodHead>
                  <Truck mark={p.mark} />
                  {p.name}
                </PeriodHead>
                <span />
                <PeriodValue>{p.left}</PeriodValue>
                <PeriodValue>{p.right}</PeriodValue>
                <Stamp>
                  <Sync color="#667180" />
                  {p.leftAt}
                </Stamp>
                <Stamp>
                  <Sync color="#667180" />
                  {p.rightAt}
                </Stamp>
              </Period>
            ))}
            <Period>
              <PeriodHead>
                <Truck mark="7+" />
                Next week
              </PeriodHead>
              <PeriodAside>73 h 55 min left</PeriodAside>
            </Period>
          </Periods>
        </SectionPlain>
      </Detail>

      <Arrow width="190" height="140" viewBox="0 0 190 140">
        <path d="M180 10 L22 119" stroke="#f09a38" strokeWidth="5" fill="none" />
        <path d="M24 105 L37 125 L9 129 Z" fill="#f09a38" />
      </Arrow>
    </App_>
  );
}
